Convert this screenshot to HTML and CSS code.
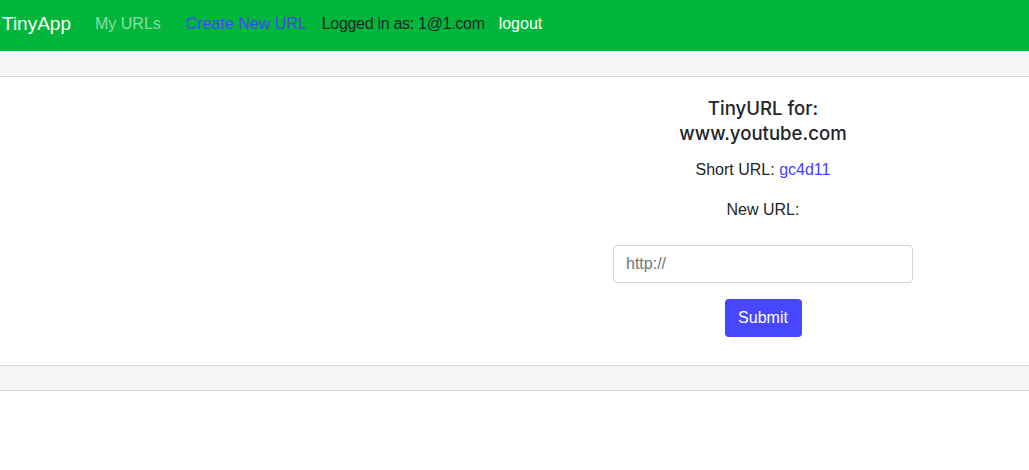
FILE: index.html
```html
<!DOCTYPE html>
<html>
<head>
<meta charset="utf-8">
<link rel="stylesheet" href="styles.css">
</head>
<body>
<nav class="navbar">
  <a class="brand" href="#">TinyApp</a>
  <a class="nav-link muted" href="#">My URLs</a>
  <a class="nav-link create" href="#">Create New URL</a>
  <span class="nav-text">Logged in as: 1@1.com</span>
  <a class="nav-link logout" href="#">logout</a>
</nav>
<main class="card">
  <div class="card-header"></div>
  <div class="card-body">
    <div class="spacer"></div>
    <div class="content">
      <h3 class="title">TinyURL for:<br>www.youtube.com</h3>
      <p class="line">Short URL: <a class="link" href="#">gc4d11</a></p>
      <p class="line new">New URL:</p>
      <form class="form">
        <input class="input" type="text" placeholder="http://">
        <button class="btn" type="button">Submit</button>
      </form>
    </div>
  </div>
  <div class="card-footer"></div>
</main>
</body>
</html>
```
FILE: styles.css
```css
* { box-sizing: border-box; }
body {
  margin: 0;
  font-family: "Liberation Sans", Arial, sans-serif;
  color: #212529;
  background: #fff;
  font-size: 16px;
}
a { text-decoration: none; }
.navbar {
  height: 51px;
  background: #00b73c;
  display: flex;
  align-items: center;
  padding: 0 0 4px 2px;
}
.brand {
  color: #fff;
  font-size: 19px;
  margin-right: 24px;
}
.nav-link, .nav-text { font-size: 16px; }
.muted { color: rgba(255,255,255,0.55); margin-right: 25px; }
.create { color: #4343ff; margin-right: 15px; }
.nav-text { color: #212529; margin-right: 14px; letter-spacing: -0.3px; }
.logout { color: #fff; }
.card-header {
  height: 26px;
  background: #f6f6f6;
  border-bottom: 1px solid #d9d9d9;
}
.card-body {
  display: flex;
  padding: 19px 0 28px;
}
.spacer { width: 497px; flex: none; }
.content {
  flex: 1;
  display: flex;
  flex-direction: column;
  align-items: center;
  text-align: center;
}
.title {
  margin: 0;
  font-family: Inter, "Liberation Sans", sans-serif;
  font-size: 18.6px;
  font-weight: 500;
  line-height: 25px;
}
.line {
  margin: 12px 0 0;
  line-height: 24px;
}
.new { margin-top: 16px; }
.link { color: #4343ff; }
.form {
  margin-top: 23px;
  display: flex;
  flex-direction: column;
  align-items: center;
}
.input {
  width: 300px;
  height: 38px;
  border: 1px solid #ced4da;
  border-radius: 4px;
  padding: 0 12px;
  font-family: inherit;
  font-size: 16px;
  color: #212529;
}
.input::placeholder { color: #6c757d; }
.btn {
  margin-top: 16px;
  width: 77px;
  height: 38px;
  background: #4747ff;
  color: #fff;
  border: none;
  border-radius: 4px;
  font-family: inherit;
  font-size: 16px;
}
.card-footer {
  height: 26px;
  background: #f6f6f6;
  border-top: 1px solid #d9d9d9;
  border-bottom: 1px solid #d9d9d9;
}
```
